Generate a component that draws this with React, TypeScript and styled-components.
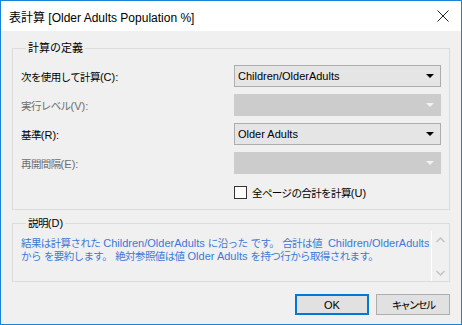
import styled, { createGlobalStyle } from 'styled-components';

const GlobalStyle = createGlobalStyle`
  html, body {
    margin: 0;
    padding: 0;
    background: #ffffff;
  }
  * {
    box-sizing: border-box;
  }
`;

const FONT = `"Liberation Sans", "Noto Sans CJK JP", sans-serif`;

interface RowDef {
  label: string;
  key: string;
  value?: string;
  disabled?: boolean;
}

const rows: RowDef[] = [
  { label: '次を使用して計算', key: 'C', value: 'Children/OlderAdults' },
  { label: '実行レベル', key: 'V', disabled: true },
  { label: '基準', key: 'R', value: 'Older Adults' },
  { label: '再開間隔', key: 'E', disabled: true },
];

export default function App() {
  return (
    <>
      <GlobalStyle />
      <StyledWindow>
        <StyledTitleBar>
          <StyledTitle>表計算 [Older Adults Population %]</StyledTitle>
          <StyledClose aria-label="close">
            <svg width="12" height="12" viewBox="0 0 12 12">
              <path d="M0.5 0.5 L11.5 11.5 M11.5 0.5 L0.5 11.5" stroke="#222" strokeWidth="1" fill="none" />
            </svg>
          </StyledClose>
        </StyledTitleBar>

        <StyledBody>
          <StyledGroup>
            <StyledLegend>計算の定義</StyledLegend>
            <StyledFormGrid>
              {rows.map((row) => (
                <StyledRow key={row.key}>
                  <StyledLabel $disabled={row.disabled}>
                    <Ja>{row.label}</Ja>({row.key}):
                  </StyledLabel>
                  <StyledCombo $disabled={row.disabled}>
                    <span>{row.value}</span>
                    <StyledArrow $disabled={row.disabled} />
                  </StyledCombo>
                </StyledRow>
              ))}
              <StyledCheckRow>
                <StyledCheckbox />
                <span>
                  <Ja>全ページの合計を計算</Ja>(U)
                </span>
              </StyledCheckRow>
            </StyledFormGrid>
          </StyledGroup>

          <StyledDescGroup>
            <StyledLegend>
              <Ja>説明</Ja>(D)
            </StyledLegend>
            <StyledDescInner>
              <StyledDescText>
                <Ja>結果は計算された</Ja> Children/OlderAdults <Ja>に沿った</Ja> <Ja>です。</Ja> <Ja>合計は値</Ja>
                &nbsp; Children/OlderAdults
                <br />
                <Ja>から</Ja> <Ja>を要約します。</Ja> <Ja>絶対参照値は値</Ja> Older Adults{' '}
                <Ja>を持つ行から取得されます。</Ja>
              </StyledDescText>
              <StyledScrollbar>
                <StyledScrollArrow>
                  <svg width="9" height="6" viewBox="0 0 9 6">
                    <path d="M0.5 5 L4.5 1 L8.5 5" stroke="#c2c2c2" strokeWidth="1.4" fill="none" />
                  </svg>
                </StyledScrollArrow>
                <StyledScrollArrow>
                  <svg width="9" height="6" viewBox="0 0 9 6">
                    <path d="M0.5 1 L4.5 5 L8.5 1" stroke="#c2c2c2" strokeWidth="1.4" fill="none" />
                  </svg>
                </StyledScrollArrow>
              </StyledScrollbar>
            </StyledDescInner>
          </StyledDescGroup>

          <StyledButtonBar>
            <StyledButton $primary>OK</StyledButton>
            <StyledButton>
              <Kana>キャンセル</Kana>
            </StyledButton>
          </StyledButtonBar>
        </StyledBody>
      </StyledWindow>
    </>
  );
}

const StyledWindow = styled.div`
  width: 462px;
  height: 325px;
  border: 1px solid #1883d7;
  background: #f0f0f0;
  display: flex;
  flex-direction: column;
  font-family: ${FONT};
  font-size: 11px;
  color: #000;
`;

const Ja = styled.span`
  font-size: 10.5px;
  letter-spacing: -0.6px;
`;

const Kana = styled.span`
  font-size: 10.5px;
  letter-spacing: -2px;
`;

const StyledTitleBar = styled.div`
  height: 30px;
  flex-shrink: 0;
  background: #ffffff;
  display: flex;
  align-items: center;
  justify-content: space-between;
  padding: 0 3px 0 8px;
`;

const StyledTitle = styled.div`
  font-size: 12px;
  color: #000;
  padding-top: 1px;
`;

const StyledClose = styled.div`
  width: 30px;
  height: 30px;
  display: flex;
  align-items: center;
  justify-content: center;
`;

const StyledBody = styled.div`
  flex-grow: 1;
  padding: 9px 11px 0 11px;
  display: flex;
  flex-direction: column;
`;

const StyledGroup = styled.fieldset`
  margin: 0;
  padding: 9px 8px 9px 8px;
  border: 1px solid #dcdcdc;
  min-width: 0;
`;

const StyledDescGroup = styled(StyledGroup)`
  margin-top: 5px;
  padding: 0 0 0 8px;
`;

const StyledLegend = styled.legend`
  margin-left: 5px;
  padding: 0 2px;
  line-height: 16px;
  font-size: 11px;
  color: #000;
`;

const StyledFormGrid = styled.div`
  display: flex;
  flex-direction: column;
  gap: 7px;
`;

const StyledRow = styled.div`
  display: grid;
  grid-template-columns: 1fr 207px;
  align-items: center;
`;

const StyledLabel = styled.div<{ $disabled?: boolean }>`
  color: ${({ $disabled }) => ($disabled ? '#6d6d6d' : '#000')};
`;

const StyledCombo = styled.div<{ $disabled?: boolean }>`
  height: 22px;
  display: flex;
  align-items: center;
  justify-content: space-between;
  padding: 0 6px 0 3px;
  background: ${({ $disabled }) => ($disabled ? '#cccccc' : '#e5e5e5')};
  border: 1px solid ${({ $disabled }) => ($disabled ? '#cccccc' : '#adadad')};
`;

const StyledArrow = styled.div<{ $disabled?: boolean }>`
  width: 0;
  height: 0;
  border-left: 4px solid transparent;
  border-right: 4px solid transparent;
  border-top: 4px solid ${({ $disabled }) => ($disabled ? '#f2f2f2' : '#000')};
`;

const StyledCheckRow = styled.div`
  margin-top: 3px;
  margin-left: 213px;
  display: flex;
  align-items: center;
  gap: 5px;
  height: 16px;
`;

const StyledCheckbox = styled.div`
  width: 13px;
  height: 13px;
  border: 1px solid #333333;
  background: #ffffff;
`;

const StyledDescInner = styled.div`
  height: 50px;
  display: flex;
  justify-content: space-between;
`;

const StyledDescText = styled.div`
  padding-top: 6px;
  line-height: 13px;
  color: #3c78d8;
  white-space: nowrap;
  overflow: hidden;
`;

const StyledScrollbar = styled.div`
  width: 18px;
  flex-shrink: 0;
  border-left: 1px solid #ffffff;
  display: flex;
  flex-direction: column;
  justify-content: space-between;
`;

const StyledScrollArrow = styled.div`
  height: 17px;
  display: flex;
  align-items: center;
  justify-content: center;
`;

const StyledButtonBar = styled.div`
  margin-top: 12px;
  display: flex;
  justify-content: flex-end;
  gap: 7px;
`;

const StyledButton = styled.div<{ $primary?: boolean }>`
  width: 74px;
  height: 21px;
  display: flex;
  align-items: center;
  justify-content: center;
  background: #e1e1e1;
  border: ${({ $primary }) => ($primary ? '2px solid #0078d7' : '1px solid #adadad')};
  color: #000;
`;
